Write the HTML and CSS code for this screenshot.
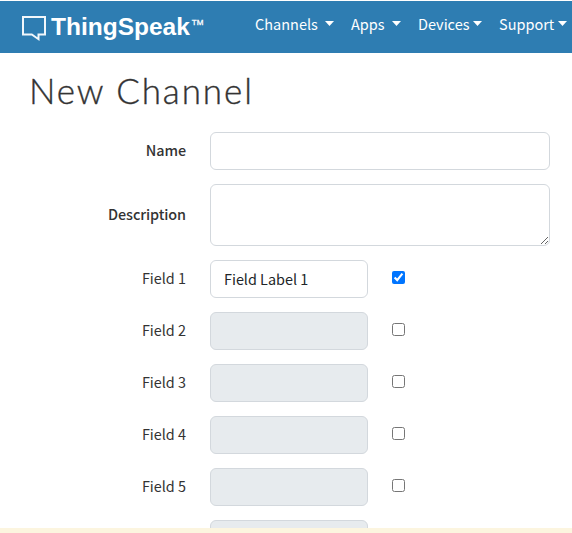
FILE: index.html
```html
<!DOCTYPE html>
<html lang="en">
<head>
<meta charset="utf-8">
<title>New Channel - ThingSpeak</title>
<link rel="stylesheet" href="styles.css">
</head>
<body>
<header class="navbar">
  <a class="brand">
    <svg class="brand-icon" width="25" height="27" viewBox="0 0 25 27" fill="none" stroke="#f1f7fb" stroke-width="2"><path d="M1 1H23V18.5H16.5V23.2L9.8 18.5H1Z"/></svg>
    <span class="brand-name">ThingSpeak</span><span class="brand-tm">TM</span>
  </a>
  <nav class="menu">
    <a class="menu-item channels">Channels<i class="caret"></i></a>
    <a class="menu-item apps">Apps<i class="caret"></i></a>
    <a class="menu-item devices">Devices<i class="caret"></i></a>
    <a class="menu-item">Support<i class="caret"></i></a>
  </nav>
</header>
<main class="content">
  <h1 class="title">New Channel</h1>
  <form class="form">
    <div class="row"><label class="label strong">Name</label><input class="control wide" type="text"></div>
    <div class="row"><label class="label strong">Description</label><textarea class="control wide area"></textarea></div>
    <div class="row"><label class="label">Field 1</label><input class="control" type="text" value="Field Label 1"><input class="check" type="checkbox" checked></div>
    <div class="row"><label class="label">Field 2</label><input class="control" type="text" disabled><input class="check" type="checkbox"></div>
    <div class="row"><label class="label">Field 3</label><input class="control" type="text" disabled><input class="check" type="checkbox"></div>
    <div class="row"><label class="label">Field 4</label><input class="control" type="text" disabled><input class="check" type="checkbox"></div>
    <div class="row"><label class="label">Field 5</label><input class="control" type="text" disabled><input class="check" type="checkbox"></div>
    <div class="row"><label class="label"></label><input class="control" type="text" disabled></div>
  </form>
</main>
<footer class="notice"></footer>
</body>
</html>
```
FILE: styles.css
```css
* { box-sizing: border-box; }
body {
  margin: 0;
  height: 533px;
  padding-top: 1px;
  display: flex;
  flex-direction: column;
  overflow: hidden;
  background: #fff;
  color: #333;
  font: 14.4px/24px "Noto Sans CJK SC", "Noto Sans", sans-serif;
}
.navbar {
  flex: none;
  height: 52px;
  padding-left: 22px;
  display: flex;
  background: #2e7db2;
  color: #fff;
}
.brand {
  width: 233px;
  display: flex;
  align-items: flex-start;
  font-family: "Liberation Sans", Arial, sans-serif;
}
.brand-icon { margin-top: 15px; }
.brand-name {
  margin: 11px 0 0 4px;
  font-size: 24.5px;
  font-weight: 700;
  line-height: 30px;
}
.brand-tm {
  margin: 15px 0 0 2px;
  font-size: 8px;
  line-height: 14px;
  -webkit-text-stroke: 0.3px #fff;
}
.menu { display: flex; padding-top: 11px; font-size: 14.5px; }
.menu-item {
  display: flex;
  justify-content: space-between;
  width: 68px;
  white-space: nowrap;
}
.caret {
  margin-top: 9px;
  width: 9px;
  height: 5px;
  background: #fff;
  clip-path: polygon(0 0, 100% 0, 50% 100%);
}
.channels { width: 79px; margin-right: 17px; }
.apps { width: 50px; margin-right: 17px; }
.devices { width: 64px; margin-right: 17px; }
.content {
  flex: 1;
  min-height: 0;
  overflow: hidden;
  padding: 16px 22px 0 30px;
}
.title {
  margin: 0 0 21px -1px;
  font: 300 35px/42px Lato, sans-serif;
  letter-spacing: 1.9px;
  -webkit-text-stroke: 0.35px #333;
}
.form { display: flex; flex-direction: column; gap: 14px; }
.row { display: flex; align-items: center; }
.label {
  width: 156px;
  margin-right: 24px;
  padding-bottom: 2px;
  text-align: right;
}
.strong { font-weight: 500; letter-spacing: -0.1px; }
.control {
  display: block;
  width: 158px;
  height: 38px;
  margin: 0;
  padding: 0 12px 2px 13px;
  border: 1px solid #d3d8dd;
  border-radius: 6px;
  background: #fff;
  color: #212529;
  font: inherit;
}
.control:disabled { background: #e7ebee; }
.wide { width: 340px; }
.area { height: 62px; }
.check { width: 13px; height: 13px; margin: 0 0 3px 24px; }
.notice { flex: none; height: 5px; background: #fcf5df; }
```
